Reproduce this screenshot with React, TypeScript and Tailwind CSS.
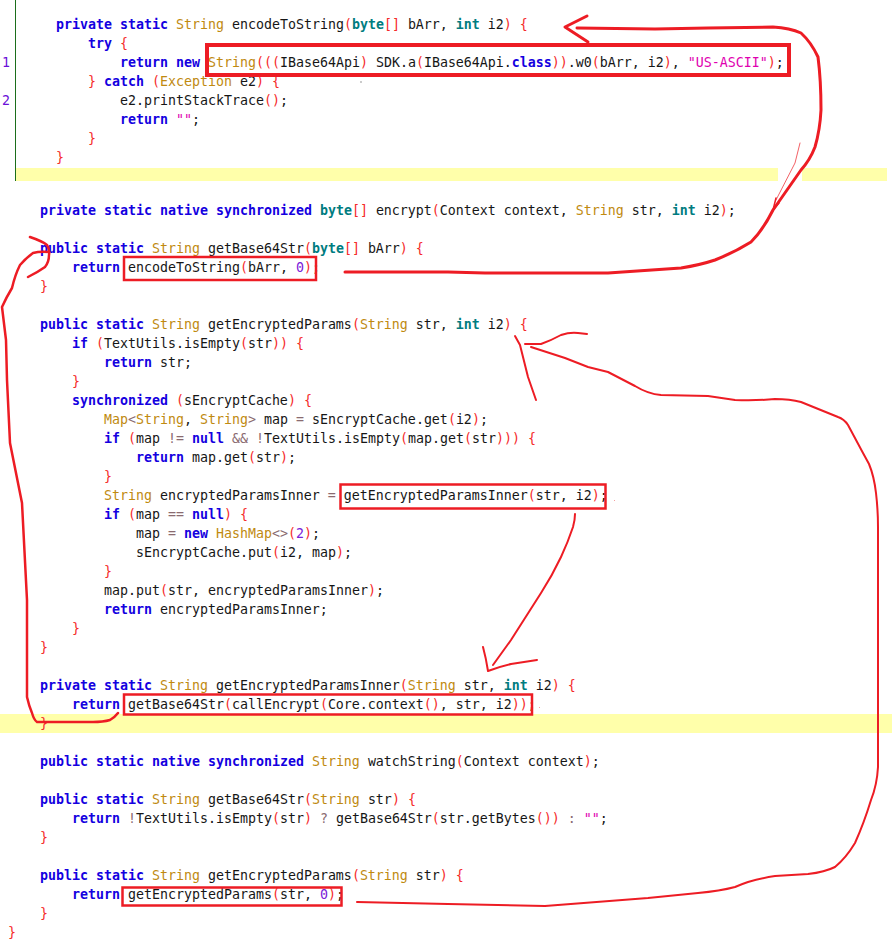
import { Fragment } from "react";

const KEYWORDS = new Set(["private", "public", "static", "native", "synchronized", "return", "new", "try", "catch", "if", "null", "class"]);
const TYPES = new Set(["String", "Exception", "Map", "HashMap"]);
const PRIMITIVES = new Set(["byte", "int"]);

const TOP_LINES = [
  { gutter: "", code: "    private static String encodeToString(byte[] bArr, int i2) {" },
  { gutter: "", code: "        try {" },
  { gutter: "1", code: '            return new String(((IBase64Api) SDK.a(IBase64Api.class)).w0(bArr, i2), "US-ASCII");' },
  { gutter: "", code: "        } catch (Exception e2) {" },
  { gutter: "2", code: "            e2.printStackTrace();" },
  { gutter: "", code: '            return "";' },
  { gutter: "", code: "        }" },
  { gutter: "", code: "    }" },
];

const LINES_BEFORE_HIGHLIGHT = [
  "    private static native synchronized byte[] encrypt(Context context, String str, int i2);",
  "",
  "    public static String getBase64Str(byte[] bArr) {",
  "        return encodeToString(bArr, 0);",
  "    }",
  "",
  "    public static String getEncryptedParams(String str, int i2) {",
  "        if (TextUtils.isEmpty(str)) {",
  "            return str;",
  "        }",
  "        synchronized (sEncryptCache) {",
  "            Map<String, String> map = sEncryptCache.get(i2);",
  "            if (map != null && !TextUtils.isEmpty(map.get(str))) {",
  "                return map.get(str);",
  "            }",
  "            String encryptedParamsInner = getEncryptedParamsInner(str, i2);",
  "            if (map == null) {",
  "                map = new HashMap<>(2);",
  "                sEncryptCache.put(i2, map);",
  "            }",
  "            map.put(str, encryptedParamsInner);",
  "            return encryptedParamsInner;",
  "        }",
  "    }",
  "",
  "    private static String getEncryptedParamsInner(String str, int i2) {",
  "        return getBase64Str(callEncrypt(Core.context(), str, i2));",
];

const LINES_AFTER_HIGHLIGHT = [
  "",
  "    public static native synchronized String watchString(Context context);",
  "",
  "    public static String getBase64Str(String str) {",
  '        return !TextUtils.isEmpty(str) ? getBase64Str(str.getBytes()) : "";',
  "    }",
  "",
  "    public static String getEncryptedParams(String str) {",
  "        return getEncryptedParams(str, 0);",
  "    }",
  "}",
];

function tokenClass(token: string) {
  if (KEYWORDS.has(token)) return "font-bold text-[#1400e0]";
  if (PRIMITIVES.has(token)) return "font-bold text-[#007c80]";
  if (TYPES.has(token)) return "text-[#c08a10]";
  if (/^"/.test(token)) return "text-[#e000b0]";
  if (/^\d+$/.test(token)) return "text-[#7a20d8]";
  if (/^[()[\]{}]$/.test(token)) return "text-[#f52a2a]";
  if (/^[=!&?:<>]+$/.test(token)) return "text-[#8a6a70]";
  return "text-[#161616]";
}

function Code({ text }: { text: string }) {
  const tokens = text.match(/"[^"]*"|\w+|\s+|[=!&]+|./g) ?? [];
  return (
    <>
      {tokens.map((token, i) => (
        <Fragment key={i}>
          <span className={tokenClass(token)}>{token}</span>
        </Fragment>
      ))}
    </>
  );
}

function CodeLine({ text }: { text: string }) {
  return (
    <div className="h-[19px] whitespace-pre pl-2">
      <Code text={text} />
    </div>
  );
}

function Annotations() {
  return (
    <svg className="pointer-events-none absolute left-0 top-0" width="896" height="945" viewBox="0 0 896 945" fill="none" stroke="#ed1c24" strokeWidth="2" strokeLinecap="round" strokeLinejoin="round">
      {/* boxes */}
      <rect x="207" y="45" width="582" height="30" strokeWidth="4" strokeLinejoin="miter" />
      <rect x="124" y="257" width="192" height="23" strokeWidth="2.5" strokeLinejoin="miter" />
      <rect x="340.5" y="484.5" width="265" height="24" strokeWidth="2.5" strokeLinejoin="miter" />
      <rect x="124" y="694.5" width="408" height="20" strokeWidth="2.5" strokeLinejoin="miter" />
      <rect x="122.5" y="887.5" width="219" height="18" strokeWidth="2.5" strokeLinejoin="miter" />

      {/* top right arrow */}
      <path d="M587 16 L565 27 L588 42" strokeWidth="3" />
      <path d="M577 28 L655 29 L708 28 L773 27 Q790 28 801 33 Q811 42 818 57 Q821 80 821 110 Q820 130 815 147 Q810 160 801 170 L773 210 Q763 230 751 242 Q735 252 715 260 Q700 265 681 268 L608 273 L485 273 L448 272 L345 272" strokeWidth="3" />
      <path d="M800 143 L795 163 L776 200" strokeWidth="0.7" />
      <path d="M776 198 L773 210 L779 203" strokeWidth="1.5" />

      {/* left curve */}
      <path d="M30 237 Q42 241 47 245 Q50 250 49 255 Q49 262 45 267 Q38 272 28 277" strokeWidth="2.5" />
      <path d="M49 252 Q40 251 33 253 Q26 258 20 265 Q15 275 12 288 Q6 298 2 307 L6 340 L7 380 L10 443 L22 503 L27 600 L27 697 Q29 706 32 713 Q34 720 37 722 L93 722 Q103 722 110 720 Q115 717 118 713" strokeWidth="2.5" />

      {/* middle arrow */}
      <path d="M575 514 Q575 520 573 527 Q568 542 561 557 Q552 576 541 593 L511 640 L493 665" />
      <path d="M483 647 Q486 658 488 671 Q498 667 511 664 L537 660" />

      {/* bottom arrow */}
      <path d="M357 902 L448 904 L545 906 L648 898 L698 893 Q720 891 735 887 Q742 884 748 882 Q762 878 775 876 L808 874 Q825 872 835 867 Q846 858 855 843 Q864 823 871 800 Q877 785 878 767 L878 527 Q878 510 876 493 Q874 476 869 464 L863 453 L848 425 Q844 419 838 417 L801 402 Q790 399 775 399 Q755 401 735 400 L708 396 L661 395 Q648 394 635 386 L608 372 L588 367 L565 358 L531 347" />
      <path d="M525 344 L541 344 Q552 340 561 335 Q570 332 578 333 L587 334" />
      <path d="M515 336 L520 345 L528 377 L536 400" />

      {/* stray marks */}
      <rect x="360.5" y="81.5" width="1" height="1" fill="#333333" stroke="none" />
      <rect x="614" y="500" width="1" height="1" fill="#f5a0a0" stroke="none" />
      <rect x="539" y="707" width="1" height="1" fill="#f5a0a0" stroke="none" />
    </svg>
  );
}

export default function App() {
  return (
    <div className="relative h-[945px] w-[896px] overflow-hidden bg-white font-['DejaVu_Sans_Mono',monospace] text-[13.29px] leading-[19px]">
      <div className="flex">
        <div className="w-[15px] pl-[2px] pt-[15px] text-[#6a10d8]">
          {TOP_LINES.map((line, i) => (
            <div key={i} className="h-[19px]">
              {line.gutter}
            </div>
          ))}
        </div>
        <div className="w-[872px] border-l border-[#1c6e1c] pt-[15px]">
          {TOP_LINES.map((line, i) => (
            <CodeLine key={i} text={line.code} />
          ))}
          <div className="mt-px flex h-[13px]">
            <div className="w-[762px] bg-[#ffffaa]" />
            <div className="ml-[24px] flex-1 bg-[#ffffaa]" />
          </div>
        </div>
      </div>

      <div className="mt-[20px]">
        {LINES_BEFORE_HIGHLIGHT.map((text, i) => (
          <CodeLine key={i} text={text} />
        ))}
        <div className="w-[892px] bg-[#ffffaa]">
          <CodeLine text="    }" />
        </div>
        {LINES_AFTER_HIGHLIGHT.map((text, i) => (
          <CodeLine key={i} text={text} />
        ))}
      </div>

      <Annotations />
    </div>
  );
}
